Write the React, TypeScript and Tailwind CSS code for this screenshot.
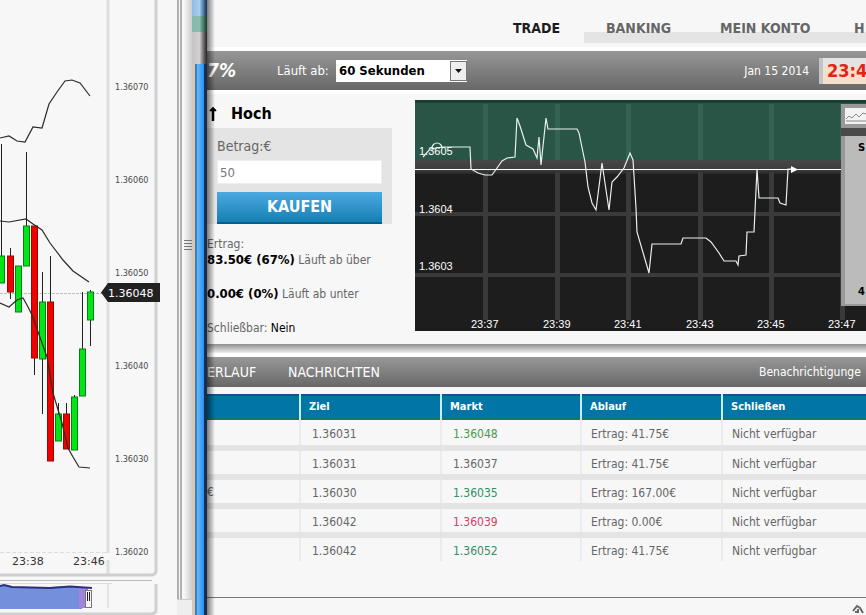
import { useState } from "react";
import { FaLongArrowAltUp } from "react-icons/fa";

const candles = [
  { x: -2, top: 256, bottom: 283, high: 144, low: 283, up: true },
  { x: 7, top: 256, bottom: 292, high: 248, low: 299, up: false },
  { x: 15, top: 266, bottom: 312, high: 266, low: 312, up: true },
  { x: 23, top: 226, bottom: 266, high: 152, low: 266, up: true },
  { x: 31, top: 226, bottom: 358, high: 226, low: 375, up: false },
  { x: 39, top: 302, bottom: 359, high: 272, low: 414, up: true },
  { x: 47, top: 302, bottom: 461, high: 256, low: 461, up: false },
  { x: 55, top: 414, bottom: 441, high: 403, low: 441, up: true },
  { x: 63, top: 414, bottom: 449, high: 403, low: 449, up: false },
  { x: 71, top: 397, bottom: 450, high: 395, low: 450, up: true },
  { x: 79, top: 349, bottom: 396, high: 292, low: 396, up: true },
  { x: 87, top: 292, bottom: 320, high: 290, low: 346, up: true },
];

const prices = [
  { label: "1.36070", y: 90 },
  { label: "1.36060", y: 183 },
  { label: "1.36050", y: 276 },
  { label: "1.36040", y: 369 },
  { label: "1.36030", y: 462 },
  { label: "1.36020", y: 555 },
];

const times = [
  { label: "23:37", x: 70 },
  { label: "23:39", x: 142 },
  { label: "23:41", x: 213 },
  { label: "23:43", x: 285 },
  { label: "23:45", x: 356 },
  { label: "23:47", x: 427 },
];

const trades = [
  { amount: "", target: "1.36031", market: "1.36048", color: "text-[#3f9c50]", result: "Ertrag: 41.75€" },
  { amount: "", target: "1.36031", market: "1.36037", color: "text-[#666666]", result: "Ertrag: 41.75€" },
  { amount: "€", target: "1.36030", market: "1.36035", color: "text-[#2f9068]", result: "Ertrag: 167.00€" },
  { amount: "", target: "1.36042", market: "1.36039", color: "text-[#cc4468]", result: "Ertrag: 0.00€" },
  { amount: "", target: "1.36042", market: "1.36052", color: "text-[#2f9068]", result: "Ertrag: 41.75€" },
];

function CandleChart() {
  return (
    <svg width="160" height="615" viewBox="0 0 160 615" className="block">
      {/* Frame */}
      <path d="M108 0V553M108 560V574" stroke="#dedede" strokeWidth="3" />
      <path d="M156 0V571Q156 574 152 575H0" fill="none" stroke="#cfcfcf" strokeWidth="3" />
      <path d="M0 552.5H107" stroke="#dddddd" strokeDasharray="4 2" />
      <path d="M0 293.5H104" stroke="#bdbdbd" strokeDasharray="3 1" />

      {/* Candles */}
      {candles.map((c) => (
        <g key={c.x}>
          <path d={`M${c.x + 3.5} ${c.high}V${c.low}`} stroke="#222222" />
          <rect x={c.x + 0.5} y={c.top} width="6" height={c.bottom - c.top} fill={c.up ? "#00e516" : "#f20000"} stroke={c.up ? "#0a7d14" : "#8e0d05"} strokeWidth="1" />
        </g>
      ))}

      {/* Bollinger bands */}
      <g fill="none" stroke="#2b2b2b" strokeWidth="1.2">
        <polyline points="0,138 9,136 17,141 25,142 33,127 42,128 49,104 57,92 65,81 72,80 80,83 90,96" />
        <polyline points="0,221 9,222 26,219 33,224 42,230 50,243 63,260 73,271 89,282" />
        <polyline points="0,303 9,307 17,300 23,298 27,305 32,315 47,357 53,393 62,423 68,448 73,457 79,467 90,468" />
      </g>

      {/* Price axis */}
      <g className="font-['DejaVu_Sans_Condensed','DejaVu_Sans',sans-serif] text-[9px]" fill="#4a4a4a">
        {prices.map((p) => (
          <text key={p.label} x="115" y={p.y}>{p.label}</text>
        ))}
      </g>
      <path d="M101 292.5L108 283H160V302H108Z" fill="#222222" />
      <g className="font-['DejaVu_Sans',sans-serif] text-[11px]">
        <text x="108" y="297" fill="#ffffff">1.36048</text>
        <text x="12" y="565" fill="#333333">23:38</text>
        <text x="73" y="565" fill="#333333">23:46</text>
      </g>

      {/* Overview */}
      <path d="M0 580.5H152" stroke="#bbbbbb" />
      <path d="M0 583.5H112" stroke="#dddddd" />
      <path d="M156 584V610Q156 613 152 614H0" fill="none" stroke="#cfcfcf" strokeWidth="3" />
      <path d="M108 584V608" stroke="#e4e4e4" strokeWidth="2" />
      <path d="M0 586L4 585L12 587H50L70 586L82 588V609H0Z" fill="#7490dc" />
      <path d="M79 588H88V608H79Z" fill="#a083dc" />
      <path d="M0 586L4 585L12 587L50 588L70 586.500L92 588" fill="none" stroke="#2c2f7c" strokeWidth="2" />
      <rect x="85.500" y="590.500" width="6" height="17" fill="#f3f3f3" stroke="#777777" />
      <path d="M87.500 592V601M89.500 592V601" stroke="#222222" />
    </svg>
  );
}

function OptionChart() {
  return (
    <svg width="100%" height="231" className="block bg-[#1d1d1d]">
      <defs>
        <linearGradient id="band" x1="0" y1="0" x2="0" y2="1">
          <stop offset="0" stopColor="#474747" />
          <stop offset="0.7" stopColor="#3d3d3d" />
          <stop offset="1" stopColor="#262626" />
        </linearGradient>
      </defs>
      <rect width="100%" height="61" fill="#285546" />
      <rect width="100%" height="3" fill="#1b4033" />
      <rect y="60" width="100%" height="14" fill="url(#band)" />
      {times.map((t) => (
        <g key={t.label}>
          <rect x={t.x - 2} y="4" width="5" height="56" fill="#356353" />
          <rect x={t.x - 2} y="72" width="5" height="148" fill="#3a3a3a" />
        </g>
      ))}
      <rect y="112" width="100%" height="4" fill="#3a3a3a" />
      <rect y="173" width="100%" height="4" fill="#3a3a3a" />
      <rect y="69" width="100%" height="1" fill="#ffffff" />
      <g fill="none" stroke="#e8efec" strokeWidth="1.2">
        <path d="M17 48A5 5 0 0 1 27 48" />
        <polyline points="8,57 15,49 28,47 55,47 56,69 63,73 70,75 77,75 82,68 87,61 92,58 100,57 102,18 105,26 111,45 118,49 122,58 124,37 126,65 131,18 133,29 162,29 164,33 170,62 173,87 177,103 181,110 187,63 194,110 197,82 202,77 209,68 215,53 218,60 221,108 222,132 234,173 237,144 266,144 268,138 291,138 296,142 304,153 309,161 321,161 323,165 324,156 331,155 332,132 339,132 342,69 344,98 363,98 365,103 371,105 373,69 380,69" />
      </g>
      <path d="M376 66L383 69.500L376 73Z" fill="#ffffff" />
      <g className="font-['Liberation_Sans',sans-serif] text-[11px]" fill="#ffffff">
        <text x="4" y="55">1.3605</text>
        <text x="4" y="113">1.3604</text>
        <text x="4" y="170">1.3603</text>
        {times.map((t) => (
          <text key={t.label} x={t.x - 14} y="228">{t.label}</text>
        ))}
      </g>
    </svg>
  );
}

export default function App() {
  const [amount, setAmount] = useState("50");
  const [runtime, setRuntime] = useState("60");

  return (
    <div className="flex min-h-screen overflow-hidden bg-[#f7f7f7] font-['DejaVu_Sans_Condensed','DejaVu_Sans',sans-serif] text-[12px] text-[#666666]">
      {/* Candle chart window */}
      <aside className="flex shrink-0">
        <CandleChart />
        <div className="flex w-8 flex-col items-end">
          <div className="flex w-[15px] flex-1 border-l-5 border-double border-[#b0b0b0]">
            <div className="ml-[2px] h-full w-2 bg-linear-to-r from-[#f7f7f7] to-[#cccccc]">
              <div className="mt-60 flex flex-col gap-[2px]">
                <span className="h-px bg-[#777777]" />
                <span className="h-px bg-[#777777]" />
                <span className="h-px bg-[#777777]" />
                <span className="h-px bg-[#777777]" />
              </div>
            </div>
          </div>
          <div className="h-4 w-[15px] border-t border-[#cccccc] bg-[#eeeeee]" />
        </div>
      </aside>

      {/* Window border */}
      <div className="flex w-[15px] shrink-0 flex-col">
        <div className="h-4 bg-linear-to-r from-[#8fbbe4] via-[#a8cdf0] to-[#0a3157]" />
        <div className="h-4 bg-linear-to-r from-[#84b9ad] via-[#8bbcae] to-[#0d4030]" />
        <div className="h-8 bg-linear-to-r from-[#c4c4c4] via-[#d4d0d0] to-[#242424]" />
        <div className="flex flex-1">
          <div className="w-[3px] bg-[#d9c6b4]" />
          <div className="w-[2px] bg-[#3c7fb4]" />
          <div className="w-[7px] bg-linear-to-r from-[#62bdfc] to-[#2c8df2]" />
          <div className="w-[3px] bg-[#12304c]" />
        </div>
      </div>

      {/* Trading window */}
      <main className="relative flex min-w-0 flex-1 flex-col overflow-hidden">
        <nav className="flex h-[47px] shrink-0 text-[14px] font-bold">
          <div className="flex flex-1 justify-end pt-5 pr-6">
            <a href="#trade" className="leading-4 text-[#1c1c1c]">TRADE</a>
          </div>
          <div className="flex w-[282px] shrink-0 bg-linear-to-b from-transparent from-[32px] via-[#e4e4e4] via-[32px] to-[#e4e4e4] to-[43px] bg-no-repeat pt-5 [background-size:100%_43px]">
            <a href="#banking" className="ml-[22px] w-[114px] leading-4 whitespace-nowrap">BANKING</a>
            <a href="#konto" className="w-[134px] leading-4 whitespace-nowrap">MEIN KONTO</a>
            <a href="#h" className="leading-4">H</a>
          </div>
        </nav>

        {/* Toolbar */}
        <header className="flex h-[43px] shrink-0 items-center border-t-4 border-white bg-linear-to-b from-[#979797] to-[#686868] text-white">
          <span className="w-[70px] text-[19px] font-bold italic">7%</span>
          <label htmlFor="runtime" className="w-[59px] text-[13px] whitespace-nowrap">Läuft ab:</label>
          <div className="relative">
            <select
              id="runtime"
              value={runtime}
              onChange={(e) => setRuntime(e.target.value)}
              className="h-[22px] w-[131px] appearance-none bg-white pl-[3px] text-[13px] font-bold text-black"
            >
              <option value="60">60 Sekunden</option>
              <option value="120">120 Sekunden</option>
            </select>
            <span className="pointer-events-none absolute top-px right-0 flex h-5 w-[17px] items-center justify-center border border-[#777777] bg-[#eeeeee]">
              <svg width="7" height="4" viewBox="0 0 7 4"><path d="M0 0H7L3.500 4Z" fill="#111111" /></svg>
            </span>
          </div>
          <span className="ml-auto pr-[10px]">Jan 15 2014</span>
          <div className="h-[26px] w-[47px] shrink-0 border-l-4 border-[#c4c4c4] bg-linear-to-b from-[#e4e4e4] from-30% to-[#f6e0cc] to-30% pl-[4px] text-[18px] leading-[26px] font-bold text-[#e02418]">
            23:4
          </div>
        </header>

        {/* Option */}
        <section className="flex h-[254px] shrink-0 border-t-4 border-white pt-[6px]">
          <div className="w-[208px] shrink-0 pr-[23px]">
            <div className="flex h-7 items-center text-[16px] font-bold text-black">
              <FaLongArrowAltUp className="mr-3 h-4 w-3" />
              Hoch
            </div>
            <form className="bg-[#e4e4e4] px-[10px] pt-2" onSubmit={(e) => e.preventDefault()}>
              <label htmlFor="amount" className="block h-6 text-[14px] leading-5">Betrag:€</label>
              <input
                id="amount"
                value={amount}
                onChange={(e) => setAmount(e.target.value)}
                className="mb-2 block h-6 w-full border border-[#eeeeee] bg-white px-[2px] text-[13px] text-[#777777]"
              />
              <button className="block h-8 w-full border-b-2 border-[#0b5c86] bg-linear-to-b from-[#4aa9e0] to-[#1180b4] text-[16px] font-bold text-white">
                KAUFEN
              </button>
            </form>
            <p className="mt-3 leading-4">Ertrag:</p>
            <p className="leading-4 whitespace-nowrap"><b className="text-[13px] text-black">83.50€ (67%)</b> Läuft ab über</p>
            <p className="mt-[18px] leading-4 whitespace-nowrap"><b className="text-[13px] text-black">0.00€ (0%)</b> Läuft ab unter</p>
            <p className="mt-[18px] leading-4 whitespace-nowrap">Schließbar: <span className="text-black">Nein</span></p>
          </div>
          <div className="relative min-w-0 flex-1">
            <OptionChart />
            <div className="absolute top-1 right-0 flex w-[25px] flex-col text-[11px] font-bold text-black">
              <div className="h-6 border-4 border-r-0 border-[#999999] bg-[#dddddd]">
                <svg width="21" height="16" viewBox="0 0 21 16">
                  <rect width="21" height="16" fill="#f3f3f3" />
                  <path d="M1 11L4 8L7 10L11 6L14 9L18 5L21 6M1 13H21" fill="none" stroke="#888888" />
                </svg>
              </div>
              <div className="h-2 bg-[#4a4a4a]" />
              <div className="flex h-[170px] flex-col justify-between border-b-2 border-l-4 border-[#999999] bg-[#bbbbbb] py-1 pl-[13px]">
                <span>S</span>
                <span>4</span>
              </div>
            </div>
          </div>
        </section>

        {/* Positions */}
        <div className="h-[13px] shrink-0 border-b-4 border-white bg-linear-to-b from-[#8f8f8f] to-[#f0f0f0]" />
        <div className="flex h-[30px] shrink-0 items-center bg-linear-to-b from-[#989898] to-[#686868] text-[14px] text-white">
          <button className="w-[81px] text-left">ERLAUF</button>
          <button>NACHRICHTEN</button>
          <a href="#benachrichtigungen" className="ml-auto w-[107px] text-[12px] whitespace-nowrap">Benachrichtigunge</a>
        </div>
        <table className="mt-[7px] w-full table-fixed border-collapse text-left">
          <colgroup>
            <col className="w-[93px]" />
            <col className="w-[141px]" />
            <col className="w-[140px]" />
            <col className="w-[141px]" />
            <col />
          </colgroup>
          <thead>
            <tr className="h-6 border-t-2 border-b-2 border-t-[#1b4f94] border-b-[#137a5e] bg-[#0075a6] text-[11px] leading-4 text-white">
              <th />
              <th className="border-l-2 border-[#c9edf5] px-2">Ziel</th>
              <th className="border-l-2 border-[#c9edf5] px-2">Markt</th>
              <th className="border-l-2 border-[#c9edf5] px-2">Ablauf</th>
              <th className="border-l-2 border-[#c9edf5] px-2">Schließen</th>
            </tr>
          </thead>
          <tbody className="leading-4">
            {trades.map((t, i) => (
              <tr key={i} className="h-[29px] border-b-6 border-[#e4e4e4] last:border-transparent">
                <td>{t.amount}</td>
                <td className="border-l-2 border-l-[#ebebeb] pt-[2px] pl-[11px]">{t.target}</td>
                <td className={"border-l-2 border-l-[#ebebeb] pt-[2px] pl-[11px] " + t.color}>{t.market}</td>
                <td className="border-l-2 border-l-[#ebebeb] pt-[2px] pl-[9px]">{t.result}</td>
                <td className="border-l-2 border-l-[#ebebeb] pt-[2px] pl-[9px]">Nicht verfügbar</td>
              </tr>
            ))}
          </tbody>
        </table>
        <footer className="mt-auto flex h-[18px] shrink-0 items-end justify-end border-t border-[#777777] pr-[2px]">
          <svg width="12" height="12" viewBox="0 0 12 12">
            <path d="M1 8L5 3L8 5L11 10M3 9H6V6" fill="none" stroke="#666666" strokeWidth="2" />
          </svg>
        </footer>

        {/* Shadow of the window edge */}
        <div className="pointer-events-none absolute inset-y-0 left-0 w-2 bg-linear-to-r from-black/50 to-transparent" />
      </main>
    </div>
  );
}
